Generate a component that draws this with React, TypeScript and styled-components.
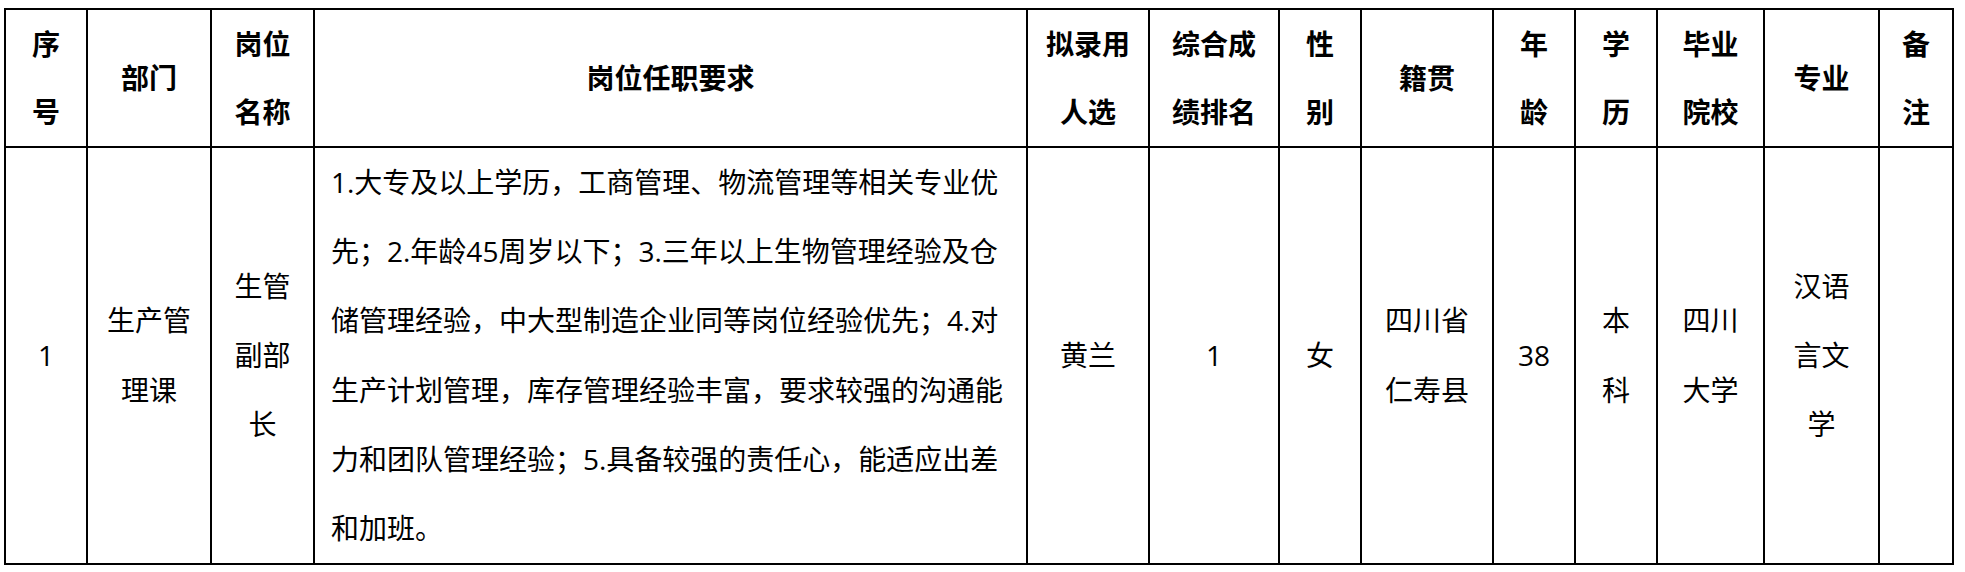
import React from "react";
import styled, { createGlobalStyle } from "styled-components";

const GlobalStyle = createGlobalStyle`
  html, body {
    margin: 0;
    padding: 0;
    background: #ffffff;
  }
  body {
    font-family: "Open Sans", "Noto Sans CJK SC", sans-serif;
    color: #000000;
  }
`;

const Page = styled.div`
  padding: 8px 0 0 4px;
`;

const Grid = styled.div`
  display: grid;
  width: max-content;
  grid-template-columns: 80px 122px 101px 711px 120px 128px 80px 130px 80px 80px 105px 113px 72px;
  grid-template-rows: 136px 415px;
  gap: 2px;
  border: 2px solid #000;
  background: #000;
`;

const Cell = styled.div<{ $head?: boolean; $left?: boolean }>`
  background: #fff;
  display: flex;
  align-items: center;
  justify-content: ${(p) => (p.$left ? "flex-start" : "center")};
  text-align: ${(p) => (p.$left ? "left" : "center")};
  padding: ${(p) => (p.$left ? "0 0 0 16px" : "0")};
  font-family: "Open Sans", "Noto Sans CJK SC", sans-serif;
  font-size: 28px;
  font-weight: ${(p) => (p.$head ? 700 : 400)};
  line-height: ${(p) => (p.$head ? "68px" : "69.2px")};
  white-space: nowrap;
  overflow: hidden;
`;

const Lines = styled.span`
  display: block;
`;

const headers: string[][] = [
  ["序", "号"],
  ["部门"],
  ["岗位", "名称"],
  ["岗位任职要求"],
  ["拟录用", "人选"],
  ["综合成", "绩排名"],
  ["性", "别"],
  ["籍贯"],
  ["年", "龄"],
  ["学", "历"],
  ["毕业", "院校"],
  ["专业"],
  ["备", "注"],
];

const row: string[][] = [
  ["1"],
  ["生产管", "理课"],
  ["生管", "副部", "长"],
  [
    "1.大专及以上学历，工商管理、物流管理等相关专业优",
    "先；2.年龄45周岁以下；3.三年以上生物管理经验及仓",
    "储管理经验，中大型制造企业同等岗位经验优先；4.对",
    "生产计划管理，库存管理经验丰富，要求较强的沟通能",
    "力和团队管理经验；5.具备较强的责任心，能适应出差",
    "和加班。",
  ],
  ["黄兰"],
  ["1"],
  ["女"],
  ["四川省", "仁寿县"],
  ["38"],
  ["本", "科"],
  ["四川", "大学"],
  ["汉语", "言文", "学"],
  [],
];

const renderLines = (lines: string[]) => (
  <Lines>
    {lines.map((l, i) => (
      <React.Fragment key={i}>
        {i > 0 && <br />}
        {l}
      </React.Fragment>
    ))}
  </Lines>
);

export default function App() {
  return (
    <>
      <GlobalStyle />
      <Page>
        <Grid>
          {headers.map((h, i) => (
            <Cell key={`h${i}`} $head>
              {renderLines(h)}
            </Cell>
          ))}
          {row.map((c, i) => (
            <Cell key={`r${i}`} $left={i === 3}>
              {renderLines(c)}
            </Cell>
          ))}
        </Grid>
      </Page>
    </>
  );
}
